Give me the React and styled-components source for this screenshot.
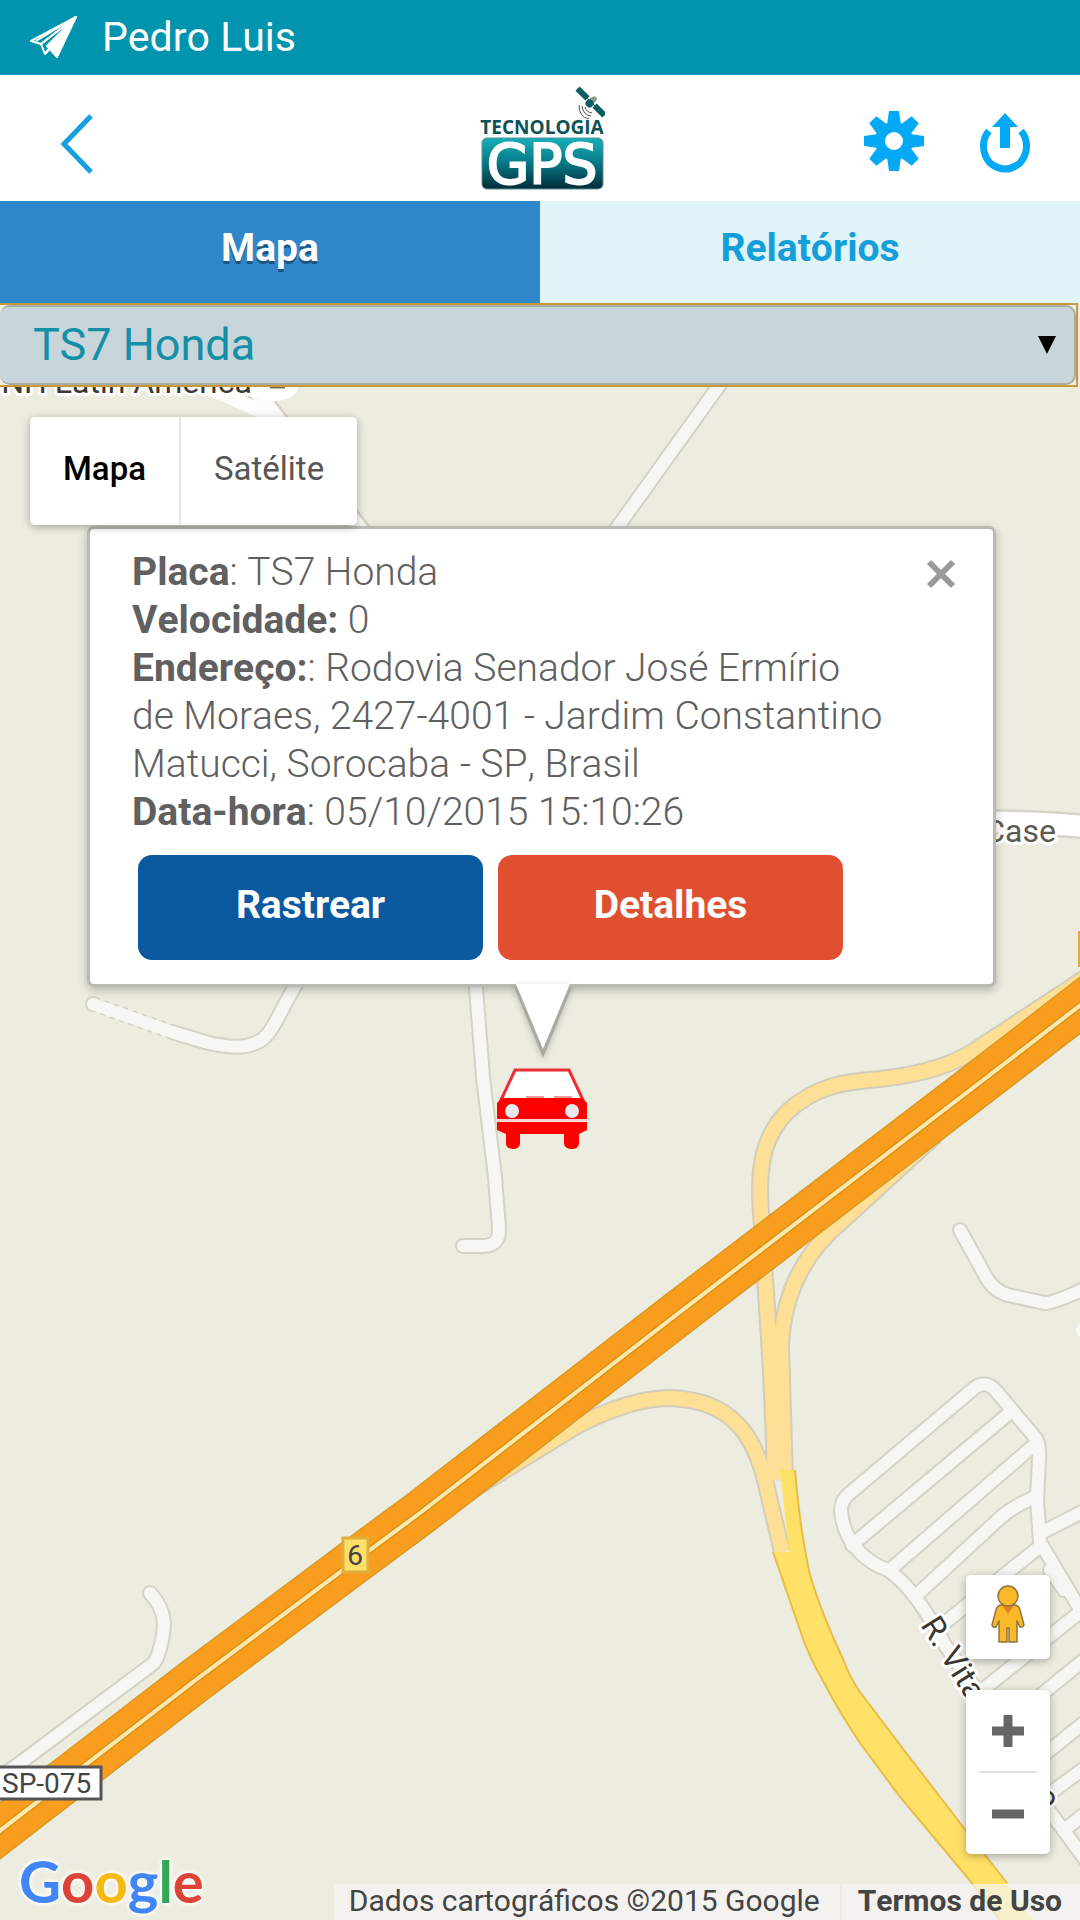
import React, { useState } from 'react'
import styled, { createGlobalStyle } from 'styled-components'

const GlobalStyle = createGlobalStyle`
  * { box-sizing: border-box; }
  body {
    margin: 0;
    font-family: Roboto, "Liberation Sans", sans-serif;
    font-kerning: none;
    background: #edece0;
  }
  button, select { font-family: inherit; }
`

const Page = styled.div`
  display: flex;
  flex-direction: column;
  min-height: 100vh;
`

const StatusBar = styled.div`
  display: flex;
  align-items: center;
  gap: 24px;
  height: 75px;
  padding: 0 28px 2px;
  background: #0094ae;
  color: #fff;
  font-size: 41px;
`

const Toolbar = styled.header`
  display: grid;
  grid-template-columns: 1fr auto 1fr;
  align-items: center;
  height: 126px;
  padding: 0 48px;
  background: #fff;
`

const ToolbarSide = styled.div`
  display: flex;
  align-items: center;
  justify-content: ${({ $end }) => ($end ? 'flex-end' : 'flex-start')};
  gap: 54px;
  padding-top: 10px;
`

const IconButton = styled.button`
  display: flex;
  padding: 0;
  border: 0;
  background: none;
  color: #03a9f4;
`

const Tabs = styled.nav`
  display: grid;
  grid-template-columns: 1fr 1fr;
`

const Tab = styled.a`
  height: 102px;
  padding-bottom: 8px;
  line-height: 94px;
  text-align: center;
  text-decoration: none;
  font-size: 39px;
  font-weight: 700;
  color: ${({ $active }) => ($active ? '#fff' : '#149fdb')};
  background: ${({ $active }) => ($active ? '#2f87c9' : '#e0f4f9')};
  text-shadow: ${({ $active }) => ($active ? '0 3px 0 #1d5580' : 'none')};
`

const SelectBox = styled.div`
  display: grid;
  align-items: center;
  height: 84px;
  margin-right: 2px;
  border: 2px solid #c69a3c;
  border-left: 0;
  background: #eeeee2;

  > * { grid-area: 1 / 1; }
`

const VehicleSelect = styled.select`
  appearance: none;
  width: 100%;
  height: 80px;
  padding: 0 33px 2px;
  border: 2px solid #a9aca4;
  border-left-width: 0;
  border-radius: 10px;
  background: #c8d5da;
  color: #148fa8;
  font-size: 45px;
`

const Arrow = styled.svg`
  justify-self: end;
  margin-right: 20px;
  pointer-events: none;
`

const Map = styled.main`
  position: relative;
  flex: 1;
  min-height: 1533px;
  overflow: hidden;
  background: #edece0;
`

const Roads = styled.svg`
  position: absolute;
  inset: 0;
  width: 100%;
  height: 100%;
`

const MapTypes = styled.div`
  position: absolute;
  z-index: 2;
  top: 30px;
  left: 30px;
  display: flex;
  border-radius: 5px;
  background: #fff;
  box-shadow: 0 2px 8px rgba(0, 0, 0, 0.3);
`

const MapType = styled.button`
  height: 108px;
  padding: 0 33px 6px;
  border: 0;
  border-left: ${({ $active }) => ($active ? '0' : '2px solid #e8e8e8')};
  background: none;
  font-size: 33px;
  font-weight: ${({ $active }) => ($active ? 500 : 400)};
  color: ${({ $active }) => ($active ? '#000' : '#565656')};
`

const Marker = styled.div`
  position: absolute;
  top: 139px;
  left: 0;
  right: 0;
  display: flex;
  flex-direction: column;
  align-items: center;
  padding: 0 84px 0 87px;
`

const InfoWindow = styled.section`
  display: flex;
  align-items: flex-start;
  justify-content: space-between;
  width: 100%;
  padding: 19px 32px 24px 42px;
  border: 3px solid #b9bab1;
  border-radius: 7px;
  background: #fff;
  background-clip: padding-box;
  box-shadow: 0 3px 10px rgba(0, 0, 0, 0.25);
`

const InfoText = styled.div`
  width: 756px;
  font-size: 39px;
  line-height: 48px;
  font-weight: 300;
  color: #606060;

  b { font-weight: 700; }
`

const Close = styled(IconButton)`
  padding: 10px 4px;
  color: #9a9a9a;
`

const Actions = styled.div`
  display: flex;
  gap: 15px;
  padding: 19px 0 0 6px;
`

const Action = styled.button`
  width: 345px;
  height: 105px;
  padding: 0 0 6px;
  border: 0;
  border-radius: 14px;
  background: ${({ $color }) => $color};
  color: #fff;
  font-size: 39px;
  font-weight: 700;
`

const Tail = styled.svg`
  z-index: 1;
  margin-top: -3px;
  filter: drop-shadow(0 2px 3px rgba(0, 0, 0, 0.2));
`

const Car = styled.svg`
  margin-top: 10px;
`

const Controls = styled.div`
  position: absolute;
  right: 30px;
  bottom: 66px;
  display: flex;
  flex-direction: column;
  gap: 31px;
`

const ControlCard = styled.div`
  display: flex;
  flex-direction: column;
  align-items: center;
  width: 84px;
  border-radius: 5px;
  background: #fff;
  box-shadow: 0 2px 8px rgba(0, 0, 0, 0.3);
`

const ControlButton = styled(IconButton)`
  align-items: center;
  justify-content: center;
  width: 84px;
  height: ${({ $tall }) => ($tall ? '84px' : '81px')};
  padding-bottom: ${({ $tall }) => ($tall ? '6px' : '0')};
  color: #666;
`

const Divider = styled.hr`
  width: 58px;
  height: 2px;
  margin: 0;
  border: 0;
  background: #e2e2e2;
`

const Google = styled.a`
  position: absolute;
  left: 19px;
  bottom: 0;
  line-height: 78px;
  font-family: Lato, sans-serif;
  font-size: 58px;
  font-weight: 700;
  text-decoration: none;
  text-shadow: 0 0 4px #fff, 0 0 4px #fff, 0 0 6px #fff;
`

const Letter = styled.span`
  color: ${({ $color }) => $color};
`

const Attribution = styled.footer`
  position: absolute;
  right: 0;
  bottom: 0;
  display: flex;
  gap: 2px;
  font-size: 30px;
  line-height: 34px;
  color: #444;
`

const Credit = styled.span`
  padding: 0 20px 2px 15px;
  background: rgba(245, 245, 245, 0.7);
`

const Terms = styled.a`
  padding: 0 18px 2px 16px;
  background: rgba(245, 245, 245, 0.7);
  color: inherit;
  font-weight: 700;
  text-decoration: none;
`

const streets = [
  'M475 975 L483 1077 L495 1177 L499 1228 Q500 1246 483 1246 L463 1246',
  'M172 1032 L205 1042 Q250 1054 267 1035 C278 1022 285 1000 305 970',
  'M150 1593 C168 1612 166 1630 158 1655 Q156 1662 150 1666 L20 1763 L-20 1792',
  'M723 380 L604 546',
  'M960 1230 L985 1275 Q992 1290 1008 1295 L1045 1303 Q1055 1303 1090 1286',
  'M985 1702 L945 1645 Q915 1588 888 1570 C870 1564 843 1545 841 1510 Q841 1500 850 1493 L972 1390 Q985 1378 996 1391 L1034 1436 Q1040 1442 1039 1458 L1037 1500 L1040 1542 L1090 1626',
  'M852 1545 L1007 1415',
  'M892 1568 L1033 1446',
  'M920 1592 L1000 1518 Q1012 1507 1035 1497',
  'M947 1621 L1038 1548',
  'M1043 1532 L1090 1508',
  'M985 1688 L1075 1616',
  'M1050 1570 L1064 1590',
  'M1020 1712 L1090 1655',
  'M1020 1774 L1090 1718',
  'M1030 1808 L1090 1764',
  'M1030 1785 L1090 1866',
  'M1064 1830 L1090 1810',
]

const ramps = [
  'M1085 978 L980 1047 Q945 1072 880 1079 C840 1082 815 1087 787 1112 C760 1140 757 1175 762 1225 C765 1300 772 1340 775 1480',
  'M935 1136 L840 1223 C800 1257 783 1300 781 1345 L785 1480',
  'M440 1510 L575 1427 Q630 1398 670 1398 C735 1400 755 1440 765 1480 L782 1552',
]

const highway = 'M-20 1846 L197 1679 L355 1561 L420 1513 L680 1312 L965 1094 L1100 990'

function MapDrawing() {
  return (
    <Roads viewBox="0 387 1080 1533" preserveAspectRatio="xMidYMid slice" fill="none" aria-hidden="true">
      <path d="M240 370 L277 418 L368 540" stroke="#d6d1c5" strokeWidth="20" />
      <path d="M200 384 L270 415" stroke="#fdfdfb" strokeWidth="14" />
      <path d="M240 370 L277 418 L368 540" stroke="#fbfbf8" strokeWidth="15" />
      <ellipse cx="274" cy="387" rx="24" ry="14" fill="#fff" />
      <path d="M270 387 h15" stroke="#776a55" strokeWidth="3" />
      <path d="M985 822 Q1040 822 1090 827" stroke="#d6d3c8" strokeWidth="26" />
      <path d="M985 822 Q1040 822 1090 827" stroke="#fff" strokeWidth="21" />
      <path d="M93 1004 L172 1032 L205 1042" stroke="#d2cec2" strokeWidth="15" strokeDasharray="5 5" />
      <circle cx="93" cy="1004" r="8" fill="#d6d3c8" />
      <g stroke="#d5d2c6" strokeWidth="16" strokeLinecap="round">
        {streets.map((d) => <path key={d} d={d} />)}
      </g>
      <g stroke="#f6f7f2" strokeWidth="12" strokeLinecap="round">
        {streets.map((d) => <path key={d} d={d} />)}
        <path d="M93 1004 L172 1032 L205 1042" />
      </g>
      <circle cx="1084" cy="1330" r="8" fill="#f7f8f2" />
      <g stroke="#d2cdbb" strokeWidth="18">
        {ramps.map((d) => <path key={d} d={d} />)}
      </g>
      <g stroke="#fde096" strokeWidth="14">
        {ramps.map((d) => <path key={d} d={d} />)}
      </g>
      <path
        d="M780 1470 L795 1470 Q800 1530 810 1575 Q822 1615 843 1659 Q850 1678 860 1692 L907 1754 L967 1832 L1007 1883 L1036 1924 L1003 1924 L967 1877 L900 1797 L860 1743 Q838 1710 823 1681 Q808 1655 800 1630 L773 1552 L789 1552 Z"
        fill="#ffe168"
      />
      <path
        d="M795 1470 Q800 1530 810 1575 Q822 1615 843 1659 Q850 1678 860 1692 L907 1754 L967 1832 L1007 1883 M1003 1924 L967 1877 L900 1797 L860 1743 Q838 1710 823 1681 Q808 1655 800 1630 L773 1552"
        stroke="#e8bd45" strokeWidth="2"
      />
      <path d={highway} stroke="#d99a24" strokeWidth="46" />
      <path d={highway} stroke="#f99d1f" strokeWidth="43" />
      <path d={highway} stroke="#db9413" strokeWidth="7" />
      <path d={highway} stroke="#fde8b0" strokeWidth="4" />
      <rect x="1078" y="931" width="30" height="36" fill="#e6a935" />
      <rect x="343" y="1538" width="25" height="34" fill="#fcdf66" stroke="#e0ae3c" strokeWidth="3" />
      <rect x="-10" y="1767" width="111" height="32" fill="#fff" stroke="#555" strokeWidth="3" />
      <g fontFamily="Roboto, sans-serif" fontSize="28" fill="#444">
        <text x="355" y="1565" textAnchor="middle">6</text>
        <text x="2" y="1793">SP-075</text>
      </g>
      <g fontFamily="Roboto, sans-serif" fontSize="32" fill="#3c3830" stroke="#fff" strokeWidth="6" paintOrder="stroke" strokeLinejoin="round">
        <text x="252" y="393" textAnchor="end">NH Latin America</text>
        <text x="1056" y="842" textAnchor="end" fill="#5d5a4e">Case</text>
        <text transform="translate(920 1625) rotate(58)">R. Vita</text>
        <text transform="translate(1034 1796) rotate(56)">o</text>
      </g>
    </Roads>
  )
}

function Logo() {
  return (
    <svg width="130" height="106" viewBox="476 85 130 106" role="img" aria-label="Tecnologia GPS">
      <defs>
        <linearGradient id="plate" x1="0" y1="0" x2="0" y2="1">
          <stop offset="0" stopColor="#16b0b8" />
          <stop offset="0.45" stopColor="#087d8c" />
          <stop offset="1" stopColor="#022c38" />
        </linearGradient>
      </defs>
      <g transform="translate(592 102) rotate(45)" fill="#0b5f62">
        <rect x="-19" y="-3" width="14" height="6" />
        <rect x="5" y="-3" width="14" height="6" />
        <path d="M-19 0 H19" stroke="#0b5f62" strokeWidth="1" />
        <ellipse cx="0" cy="-3" rx="3" ry="4" fill="#8c9a8c" />
        <circle cx="0" cy="2" r="4" />
      </g>
      <g fill="none" stroke="#555" strokeWidth="1">
        <path d="M586 107 Q587 112 593 113" />
        <path d="M583 106 Q584 115 592 116" />
        <path d="M580 105 Q580 117 590 119" />
      </g>
      <text x="543" y="134" textAnchor="middle" fontFamily="Open Sans, sans-serif" fontWeight="700" fontSize="19" fill="#0b5358">TECNOLOGIA</text>
      <rect x="483" y="138" width="121" height="51" rx="5" fill="url(#plate)" stroke="#5c8f95" strokeWidth="1" />
      <text x="543" y="183" textAnchor="middle" fontFamily="DejaVu Sans, sans-serif" fontSize="55" fill="#fff" stroke="#fff" strokeWidth="2">GPS</text>
    </svg>
  )
}

const gearTeeth = [0, 45, 90, 135, 180, 225, 270, 315]

function App() {
  const [vehicle, setVehicle] = useState('TS7 Honda')

  return (
    <>
      <GlobalStyle />
      <Page>
        <StatusBar>
          <svg width="50" height="44" viewBox="0 0 50 44" fill="none" stroke="#fff" strokeWidth="2" strokeLinejoin="round">
            <path d="M48 2 L3 26 L13 29 Z" fill="#0094ae" />
            <path d="M48 2 L13 29 L17 39 Z" />
            <path d="M48 2 L19 31 L29 42 Z" fill="#fff" />
            <path d="M48 2 L8 26 M17 39 L22 33" />
          </svg>
          <span>Pedro Luis</span>
        </StatusBar>

        <Toolbar>
          <ToolbarSide>
            <IconButton aria-label="Voltar">
              <svg width="58" height="62" viewBox="0 0 58 62" fill="none" stroke="#149fdf" strokeWidth="5">
                <path d="M43 4 L16 32 L43 60" />
              </svg>
            </IconButton>
          </ToolbarSide>
          <Logo />
          <ToolbarSide $end>
            <IconButton aria-label="Configurações">
              <svg width="60" height="64" viewBox="-30 -30 60 64" fill="currentColor">
                <circle r="14" fill="none" stroke="currentColor" strokeWidth="10" />
                {gearTeeth.map((angle) => (
                  <path key={angle} d="M-7 -16 L-5 -30 H5 L7 -16 Z" transform={`rotate(${angle})`} />
                ))}
              </svg>
            </IconButton>
            <IconButton aria-label="Sair">
              <svg width="54" height="62" viewBox="0 0 54 62" fill="none">
                <path d="M11 19 C3 28 4 42 12 51 Q27 63 42 51 C50 42 51 28 43 19" stroke="currentColor" strokeWidth="7" />
                <path d="M27 1 L40 15 H32 V36 H22 V15 H14 Z" fill="currentColor" />
              </svg>
            </IconButton>
          </ToolbarSide>
        </Toolbar>

        <Tabs>
          <Tab href="#mapa" $active>Mapa</Tab>
          <Tab href="#relatorios">Relatórios</Tab>
        </Tabs>

        <SelectBox>
          <VehicleSelect aria-label="Veículo" value={vehicle} onChange={(e) => setVehicle(e.target.value)}>
            <option>TS7 Honda</option>
          </VehicleSelect>
          <Arrow width="18" height="18" viewBox="0 0 18 18"><path d="M0 0 H18 L9 18 Z" /></Arrow>
        </SelectBox>

        <Map>
          <MapDrawing />

          <MapTypes>
            <MapType $active>Mapa</MapType>
            <MapType>Satélite</MapType>
          </MapTypes>

          <Marker>
            <InfoWindow>
              <InfoText>
                <b>Placa</b>: {vehicle}<br />
                <b>Velocidade:</b> 0<br />
                <b>Endereço:</b>: Rodovia Senador José Ermírio de Moraes, 2427-4001 - Jardim Constantino Matucci, Sorocaba - SP, Brasil<br />
                <b>Data-hora</b>: 05/10/2015 15:10:26
                <Actions>
                  <Action $color="#0b5a9f">Rastrear</Action>
                  <Action $color="#e05030">Detalhes</Action>
                </Actions>
              </InfoText>
              <Close aria-label="Fechar">
                <svg width="32" height="32" viewBox="0 0 32 32" stroke="currentColor" strokeWidth="6">
                  <path d="M4 4 L28 28 M28 4 L4 28" />
                </svg>
              </Close>
            </InfoWindow>
            <Tail width="66" height="74" viewBox="0 0 66 74">
              <path d="M5 3 L34 74 L63 3 Z" fill="#a9aaa2" />
              <path d="M7 0 L34 65 L61 0 Z" fill="#fff" />
            </Tail>
            <Car width="92" height="82" viewBox="0 0 92 82">
              <path d="M19 2 H73 L87 32 H5 Z" fill="#fff" stroke="#ee2c34" strokeWidth="3" />
              <path d="M6 30 H86 L91 35 V51 H1 V35 Z" fill="#f00" />
              <path d="M30 29 H48 M58 29 H76" stroke="#e99" strokeWidth="2" />
              <path d="M1 54 H91 V62 L83 66 V76 Q82 81 76 81 Q69 81 68 76 V66 H24 V76 Q23 81 17 81 Q11 81 10 76 V66 L1 62 Z" fill="#f00" />
              <path d="M1 52 H91" stroke="#fcc" strokeWidth="2" />
              <circle cx="16" cy="43" r="7" fill="#e8e8ee" />
              <circle cx="76" cy="43" r="7" fill="#e8e8ee" />
            </Car>
          </Marker>

          <Controls>
            <ControlCard>
              <ControlButton $tall aria-label="Street View">
                <svg width="36" height="60" viewBox="0 0 36 60" fill="#fbb829" stroke="#8f7440" strokeWidth="1.5" strokeLinejoin="round">
                  <path d="M12 21 H24 Q29 21 30 26 L34 41 Q33 44 30 43 L27 37 V58 H19 V44 H17 V58 H9 V37 L6 43 Q3 44 2 41 L6 26 Q7 21 12 21 Z" />
                  <path d="M12 21 H24 L18 30 Z" fill="#e2801e" stroke="none" />
                  <circle cx="18" cy="12" r="10" />
                </svg>
              </ControlButton>
            </ControlCard>
            <ControlCard>
              <ControlButton aria-label="Aumentar zoom">
                <svg width="32" height="32" viewBox="0 0 32 32" stroke="currentColor" strokeWidth="9">
                  <path d="M16 0 V32 M0 16 H32" />
                </svg>
              </ControlButton>
              <Divider />
              <ControlButton aria-label="Diminuir zoom">
                <svg width="32" height="32" viewBox="0 0 32 32" stroke="currentColor" strokeWidth="9">
                  <path d="M0 16 H32" />
                </svg>
              </ControlButton>
            </ControlCard>
          </Controls>

          <Google href="#google" aria-label="Google">
            <Letter $color="#4286f5">G</Letter>
            <Letter $color="#dc4437">o</Letter>
            <Letter $color="#f5b912">o</Letter>
            <Letter $color="#4286f5">g</Letter>
            <Letter $color="#34a655">l</Letter>
            <Letter $color="#dc4437">e</Letter>
          </Google>

          <Attribution>
            <Credit>Dados cartográficos ©2015 Google</Credit>
            <Terms href="#termos">Termos de Uso</Terms>
          </Attribution>
        </Map>
      </Page>
    </>
  )
}

export default App
